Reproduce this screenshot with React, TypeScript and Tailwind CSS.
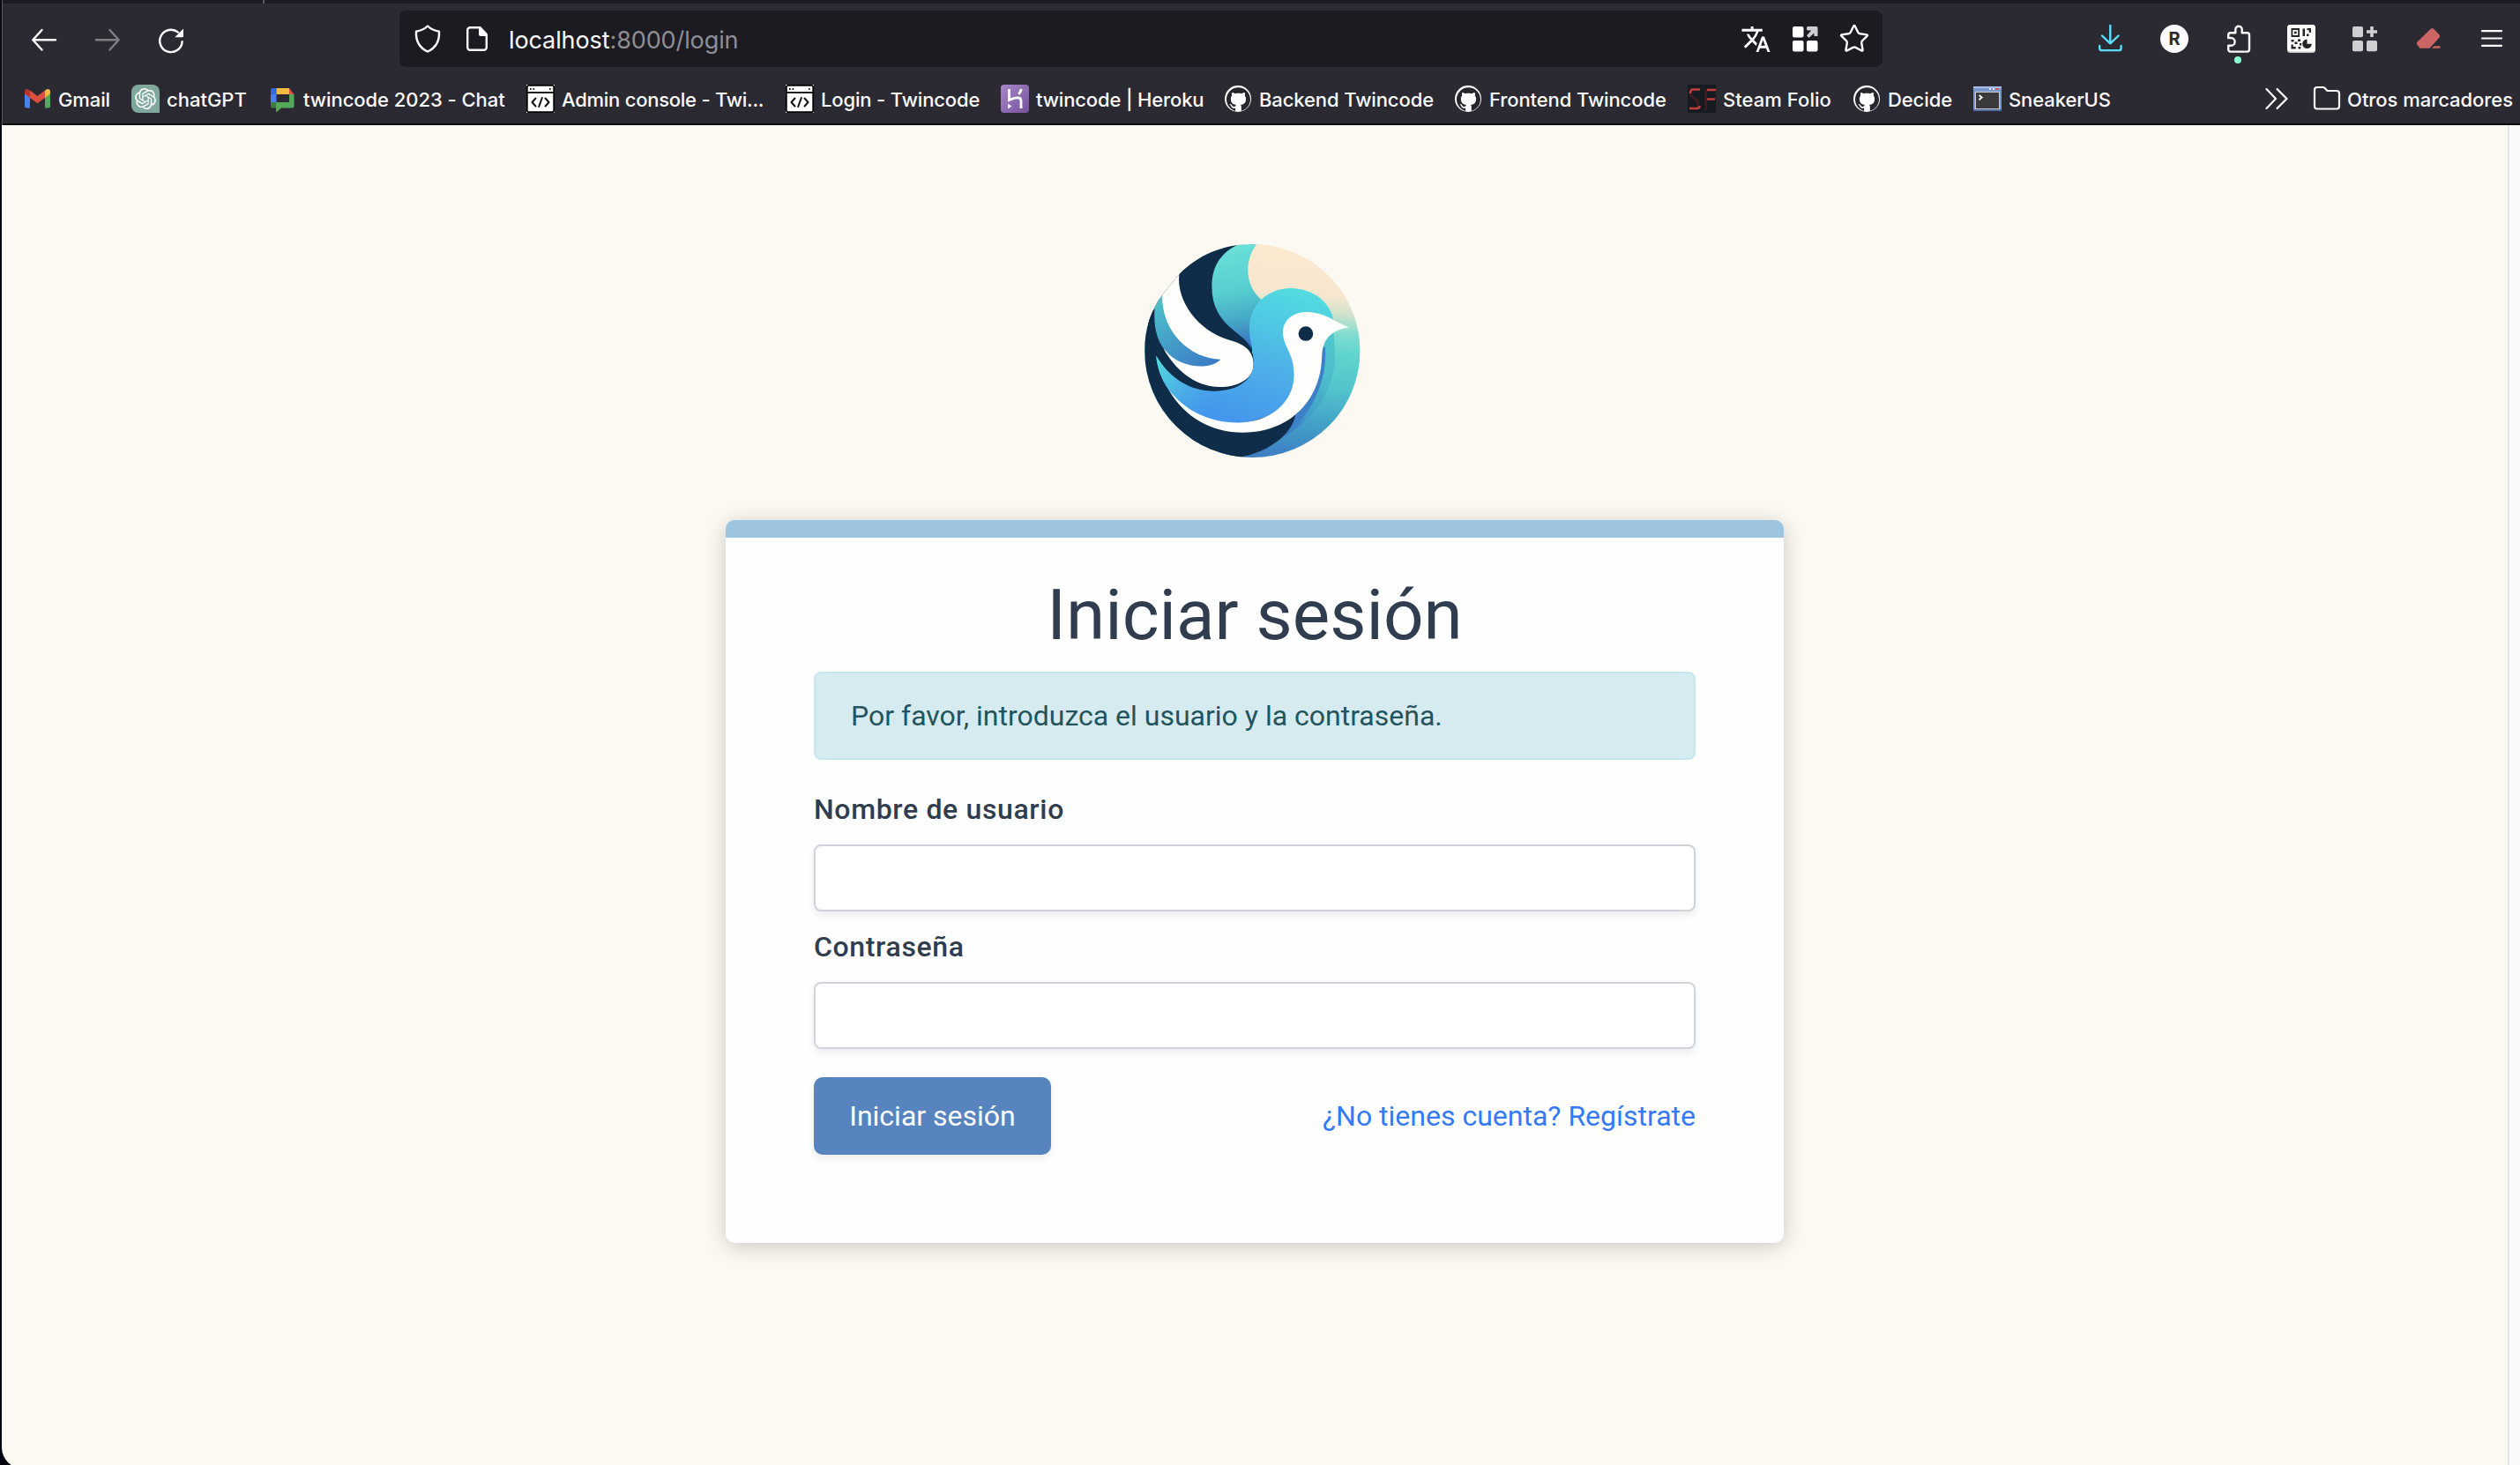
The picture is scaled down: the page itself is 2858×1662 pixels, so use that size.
import React from "react";
import { Star } from "lucide-react";
import { MdTranslate } from "react-icons/md";
import { SiOpenai, SiGithub } from "react-icons/si";

const stroke = {
  fill: "none",
  stroke: "currentColor",
  strokeWidth: 2.4,
  strokeLinecap: "round" as const,
  strokeLinejoin: "round" as const,
};

function Glyph({ children, className = "" }: { children: React.ReactNode; className?: string }) {
  return (
    <svg viewBox="0 0 32 32" className={`size-8 shrink-0 overflow-visible ${className}`}>
      {children}
    </svg>
  );
}

/* Toolbar icons */
const BackIcon = () => (
  <Glyph className="text-[#fbfbfe]">
    <path {...stroke} d="M29 17.3H3.3M13.5 6 3.3 17.3 13.5 28.5" />
  </Glyph>
);
const ForwardIcon = () => (
  <Glyph className="text-[#7f7e83]">
    <path {...stroke} d="M3 17.3h25.700M18.500 6l10.200 11.300L18.500 28.500" />
  </Glyph>
);
const ReloadIcon = () => (
  <Glyph className="text-[#fbfbfe]">
    <path {...stroke} d="M28.600 19.300A12.700 12.700 0 1 1 24 8.600" />
    <path fill="currentColor" d="M30 4.500v8.500a1.200 1.200 0 0 1-1.200 1.200h-8.500z" />
  </Glyph>
);
const ShieldIcon = () => (
  <Glyph className="text-[#fbfbfe]">
    <path {...stroke} d="M16 1.500c3.500 3.400 8 5.400 13 6.200.6 9.800-3.500 18.300-13 22.800C6.500 26 2.400 17.500 3 7.700c5-.8 9.500-2.800 13-6.200z" />
  </Glyph>
);
const PageIcon = () => (
  <Glyph className="text-[#fbfbfe]">
    <path {...stroke} d="M18 3.200H8.200a3 3 0 0 0-3 3v19.600a3 3 0 0 0 3 3h15.600a3 3 0 0 0 3-3V12" />
    <path fill="currentColor" d="M18 2h2l8 8.500v2.500h-8a2 2 0 0 1-2-2z" />
  </Glyph>
);
const OpenGridIcon = () => (
  <Glyph>
    <g fill="#fff">
      <rect x="2" y="2" width="12.500" height="12.500" rx="2" />
      <rect x="2" y="18" width="12.500" height="12.500" rx="2" />
      <rect x="18" y="18" width="12.500" height="12.500" rx="2" />
    </g>
    <path fill="#cfcfd1" d="M19.500 2h9.500a1.500 1.500 0 0 1 1.500 1.500V13h-4V9.500L20.500 15 18 12.200 23.300 6.500h-3.800a1.500 1.500 0 0 1-1.500-1.500V3.500A1.500 1.500 0 0 1 19.500 2z" />
  </Glyph>
);
const DownloadIcon = () => (
  <Glyph className="text-[#5cdcff]">
    <path {...stroke} d="M15.300 1v20.300M6 12.500l9.300 8.800 9.300-8.800M3.200 24v2.400a2.700 2.700 0 0 0 2.700 2.700h19a2.700 2.700 0 0 0 2.700-2.700V24" />
  </Glyph>
);
const AccountIcon = () => (
  <div className="flex size-8 items-center justify-center rounded-full bg-[#fbfbfe] text-[20px] leading-none font-bold text-[#2b2a33]">
    R
  </div>
);
const ExtensionIcon = () => (
  <div className="relative size-8">
    <Glyph className="text-[#fbfbfe]">
      <path
        {...stroke}
        d="M5.200 15v-3.200a2.500 2.500 0 0 1 2.500-2.500h5.600V5.400a3.700 3.700 0 0 1 7.400 0v3.900h5.800A2.500 2.500 0 0 1 29 11.800v16.300a2.500 2.500 0 0 1-2.500 2.500H7.700a2.500 2.500 0 0 1-2.500-2.500v-4.300h3a4.400 4.400 0 0 0 0-8.800z"
      />
    </Glyph>
    <span className="absolute top-9 left-3 size-2 rounded-full bg-[#88ffd1]" />
  </div>
);
const QrIcon = () => (
  <Glyph>
    <rect width="32" height="32" rx="3.500" fill="#c4c4c4" />
    <rect width="32" height="30.500" rx="3.500" fill="#fbfbfb" />
    <g fill="#242424">
      <path fillRule="evenodd" d="M4.500 4H14v10H4.500zM6.300 5.900v6.200h5.900V5.900z" />
      <rect x="8" y="7.700" width="2.600" height="2.600" />
      <path d="M17.500 4.500h2.600V13h-2.600zM22.500 4H27v5h-2.200V6.200h-2.300zM22 10.500h2.500V13H22zM4.500 17h3v2.500h-3zM12 16.500h3v2.500h-3zM8.500 19.500h3V22h-3zM4.500 22.500h2.200V25h3v2.500H4.500zM14 21h2.200v2.500H14zM12.500 25h2.700v2.500h-2.700z" />
      <path d="M22.500 16.500v5.200h5.300A5.300 5.300 0 1 1 22.500 16.500z" />
    </g>
  </Glyph>
);
const AddGridIcon = () => (
  <Glyph>
    <g fill="#cfcfd1">
      <rect x="2" y="2" width="12" height="12.200" rx="2" />
      <rect x="2" y="18" width="12" height="12.200" rx="2" />
      <rect x="18" y="18" width="12" height="12.200" rx="2" />
      <path d="M22.200 2h3.600v4.200H30v3.600h-4.200V14h-3.600V9.800H18V6.200h4.200z" />
    </g>
  </Glyph>
);
const EraserIcon = () => (
  <Glyph>
    <path fill="#cc6664" d="M19 4.600a2 2 0 0 1 2.800 0l6.800 6.900a2.300 2.300 0 0 1 0 3L17.500 26.700H6.600L3.300 22.500a2.300 2.300 0 0 1 0-2.800zM22.500 24.200h7v2.500H20z" />
  </Glyph>
);
const MenuIcon = () => (
  <Glyph className="text-[#fbfbfe]">
    <path {...stroke} strokeWidth={2.200} d="M5 7.200h22M5 15.500h22M5 23.800h22" />
  </Glyph>
);

/* Bookmark icons */
const GmailIcon = () => (
  <Glyph>
    <path fill="#4a80ee" d="M2 9l6 4.500V26.500H4A2 2 0 0 1 2 24.500z" />
    <path fill="#55a85a" d="M25 13.500 31 9v15.500a2 2 0 0 1-2 2h-4z" />
    <path fill="#f2bd42" d="M25 7l1.200-1.200C28.200 4 31 5.300 31 8v2.300l-6 4.600z" />
    <path fill="#d9503f" d="M8 6.500l8.500 6.400L25 6.500v8.400l-8.500 6.400L8 14.900z" />
    <path fill="#b93328" d="M2 8c0-2.700 2.800-4 4.800-2.200L8 7v7.900l-6-4.600z" />
  </Glyph>
);
const ChatGptIcon = () => (
  <div className="flex size-8 shrink-0 items-center justify-center rounded-t-lg rounded-bl-lg bg-[#80a79b]">
    <SiOpenai className="size-6 text-white" />
  </div>
);
const GoogleChatIcon = () => (
  <Glyph>
    <path fill="#3467d6" d="M3 6a2 2 0 0 1 2-2h4.500v7H3z" />
    <path fill="#f2bd42" d="M9.500 4H24v7H9.500z" />
    <path fill="#d9503f" d="M24 4l5.500 7H24z" />
    <path fill="#4a80ee" d="M3 11h6.500v9H3z" />
    <path fill="#3c7c40" d="M3 20h6.500v6.500H5a2 2 0 0 1-2-2z" />
    <path fill="#55a85a" d="M24 11h5.500v13.500a2 2 0 0 1-2 2H15L10 31c-.5.400-1 .1-1-.500V20h15z" />
  </Glyph>
);
const CodeWindowIcon = () => (
  <Glyph>
    <rect width="32" height="32" fill="#fff" />
    <rect x="0.800" y="0.800" width="30.400" height="30.400" rx="2" fill="#fff" stroke="#000" strokeWidth="1.800" />
    <path fill="#1f1f1f" d="M1 8h30v2H1zM4 4h1.600v2H4zM7.500 4h1.600v2H7.500zM26 4h1.600v2H26z" />
    <path {...stroke} stroke="#111" strokeWidth={2} d="M10.500 15.500 6.500 20l4 4.500M21.500 15.500l4 4.500-4 4.500M17.800 15l-3.600 10" />
  </Glyph>
);
const HerokuIcon = () => (
  <Glyph>
    <defs>
      <linearGradient id="heroku" x1="0" y1="0" x2="1" y2="1">
        <stop offset="0" stopColor="#a687c6" />
        <stop offset="1" stopColor="#77529e" />
      </linearGradient>
    </defs>
    <rect width="32" height="32" rx="4" fill="url(#heroku)" />
    <path fill="none" stroke="#fff" strokeWidth="2.800" d="M9.500 5v12.500c4-1.800 7-2.600 9.500-2.600 3 0 4 1.600 4 3.600V27M23.200 5c-.3 2.200-1.300 4-2.900 6" />
    <path fill="#fff" d="M8.200 21.500l4.200 3-4.200 3z" />
  </Glyph>
);
const GitHubIcon = () => (
  <div className="flex size-8 shrink-0 items-center justify-center">
    <div className="flex size-[30px] items-center justify-center rounded-full bg-white">
      <SiGithub className="size-[27px] text-[#26262c]" />
    </div>
  </div>
);
const SteamFolioIcon = () => (
  <Glyph>
    <rect width="32" height="32" fill="#171a21" />
    <path fill="none" stroke="#3a1d22" strokeWidth="3" d="M3.500 8v4l8 7v7M20.500 5v24" />
    <path fill="none" stroke="#c0403a" strokeWidth="2.600" d="M3 10q0-4.500 3-4.500h8M2 27h9q2.500 0 2.500-3M22 6h10M22 16.500h9" />
  </Glyph>
);
const TerminalIcon = () => (
  <Glyph>
    <rect y="2" width="32" height="28" fill="#7898cd" />
    <rect y="2" width="32" height="2" fill="#a5bde4" />
    <rect y="28" width="32" height="2" fill="#4f6ea6" />
    <rect x="2" y="8" width="28" height="20" fill="#c9cdd2" />
    <rect x="3" y="9" width="26" height="18" fill="#3a3a3a" />
    <path fill="#e8553f" d="M26 4h2.500v2H26z" />
    <path fill="#dfe7f5" d="M18 4h2v2h-2zM22 4h2v2h-2z" />
    <path fill="none" stroke="#fff" strokeWidth="1.800" d="M6.500 12l3.200 2.500-3.200 2.700" />
  </Glyph>
);
const ChevronsIcon = () => (
  <Glyph className="text-[#fbfbfe]">
    <path {...stroke} strokeWidth={2.200} d="M4.500 5 15 16 4.500 27M16.500 5 27.500 16 16.500 27" />
  </Glyph>
);
const FolderIcon = () => (
  <Glyph className="text-[#fbfbfe]">
    <path {...stroke} strokeWidth={2.200} d="M2 6a3 3 0 0 1 3-3h6.500a3 3 0 0 1 2.200 1L16.500 7H27a3 3 0 0 1 3 3v14.500a3 3 0 0 1-3 3H5a3 3 0 0 1-3-3z" />
  </Glyph>
);

const bookmarks = [
  { label: "Gmail", icon: <GmailIcon />, width: "w-[123px]", track: "tracking-[-0.1px]" },
  { label: "chatGPT", icon: <ChatGptIcon />, width: "w-[155px]", track: "tracking-[0px]" },
  { label: "twincode 2023 - Chat", icon: <GoogleChatIcon />, width: "w-[293px]", track: "tracking-[-0.05px]" },
  { label: "Admin console - Twi...", icon: <CodeWindowIcon />, width: "w-[294px]", track: "tracking-[-0.25px]" },
  { label: "Login - Twincode", icon: <CodeWindowIcon />, width: "w-[244px]", track: "tracking-[-0.15px]" },
  { label: "twincode | Heroku", icon: <HerokuIcon />, width: "w-[253px]", track: "tracking-[-0.15px]" },
  { label: "Backend Twincode", icon: <GitHubIcon />, width: "w-[261px]", track: "tracking-[-0.1px]" },
  { label: "Frontend Twincode", icon: <GitHubIcon />, width: "w-[265px]", track: "tracking-[-0.1px]" },
  { label: "Steam Folio", icon: <SteamFolioIcon />, width: "w-[187px]", track: "tracking-[0.05px]" },
  { label: "Decide", icon: <GitHubIcon />, width: "w-[137px]", track: "tracking-[-0.1px]" },
  { label: "SneakerUS", icon: <TerminalIcon />, width: "w-[160px]", track: "tracking-[-0.1px]" },
];

function BrowserChrome() {
  return (
    <header className="h-[142px] border-b-2 border-[#0c0b10] bg-[#2b2a33] font-['Inter',sans-serif] text-[#fbfbfe]">
      <div className="flex h-1 bg-[#1c1b22]">
        <div className="w-[300px] border-r-2 border-[#5b5a62]" />
      </div>
      <div className="flex h-20 items-center pr-4 pl-[34px]">
        <div className="flex gap-10">
          <BackIcon />
          <ForwardIcon />
          <ReloadIcon />
        </div>
        <div className="ml-[243px] flex h-16 w-[1682px] items-center rounded-lg bg-[#1c1b22] pr-[14px] pl-4">
          <ShieldIcon />
          <div className="ml-6">
            <PageIcon />
          </div>
          <p className="ml-5 pt-[3px] text-[27px] leading-8 tracking-[-0.1px] text-[#8f8e94]">
            <span className="text-[#fbfbfe]">localhost</span>:8000/login
          </p>
          <div className="ml-auto flex items-center">
            <MdTranslate className="mr-[22px] size-[35px] text-[#fbfbfe]" />
            <OpenGridIcon />
            <Star className="ml-[22px] size-[36px] text-[#fbfbfe]" strokeWidth={1.600} />
          </div>
        </div>
        <div className="ml-auto flex gap-10">
          <DownloadIcon />
          <AccountIcon />
          <ExtensionIcon />
          <QrIcon />
          <AddGridIcon />
          <EraserIcon />
          <MenuIcon />
        </div>
      </div>
      <nav className="flex h-14 items-center pr-2 pl-[26px] text-[22px] leading-8 font-medium whitespace-nowrap">
        {bookmarks.map((b) => (
          <a key={b.label} className={`flex shrink-0 items-center gap-2 ${b.width} ${b.track}`}>
            {b.icon}
            <span className="pt-0.5">{b.label}</span>
          </a>
        ))}
        <div className="ml-auto flex items-center">
          <ChevronsIcon />
          <div className="ml-[25px]">
            <FolderIcon />
          </div>
          <span className="ml-[7px] pt-0.5 tracking-[-0.05px]">Otros marcadores</span>
        </div>
      </nav>
    </header>
  );
}

function BirdLogo() {
  return (
    <svg viewBox="54 50 735 727" className="mr-[5px] h-[242px] w-[245px]">
      <defs>
        <clipPath id="disc">
          <path d="M172 152C235 88 320 50 421 50a367 363.500 0 0 1 0 727A367 363.500 0 0 1 54 414C54 340 75 275 115 222z" />
        </clipPath>
        <linearGradient id="sky" gradientUnits="userSpaceOnUse" x1="620" y1="60" x2="560" y2="777">
          <stop offset="0" stopColor="#fbe9d0" />
          <stop offset="0.220" stopColor="#f8e7cf" />
          <stop offset="0.300" stopColor="#d3e2cc" />
          <stop offset="0.400" stopColor="#7fdccf" />
          <stop offset="0.500" stopColor="#5ed4ce" />
          <stop offset="0.660" stopColor="#52c4cc" />
          <stop offset="0.820" stopColor="#43a3c8" />
          <stop offset="1" stopColor="#3e7fc4" />
        </linearGradient>
        <linearGradient id="band" gradientUnits="userSpaceOnUse" x1="340" y1="60" x2="400" y2="400">
          <stop offset="0" stopColor="#6be0d8" />
          <stop offset="0.450" stopColor="#56cdd0" />
          <stop offset="0.720" stopColor="#45a9c6" />
          <stop offset="1" stopColor="#3a70c4" />
        </linearGradient>
        <linearGradient id="body" gradientUnits="userSpaceOnUse" x1="540" y1="200" x2="400" y2="660">
          <stop offset="0" stopColor="#52dbe0" />
          <stop offset="0.300" stopColor="#4fc6e4" />
          <stop offset="0.650" stopColor="#4cabe8" />
          <stop offset="1" stopColor="#4497ec" />
        </linearGradient>
        <linearGradient id="tail" gradientUnits="userSpaceOnUse" x1="90" y1="450" x2="290" y2="570">
          <stop offset="0" stopColor="#55dcdc" />
          <stop offset="1" stopColor="#4cb4e6" stopOpacity="0" />
        </linearGradient>
        <linearGradient id="feather" gradientUnits="userSpaceOnUse" x1="100" y1="230" x2="260" y2="470">
          <stop offset="0" stopColor="#52c3ca" />
          <stop offset="0.550" stopColor="#439cc8" />
          <stop offset="1" stopColor="#3c7dc6" />
        </linearGradient>
        <linearGradient id="shade" gradientUnits="userSpaceOnUse" x1="680" y1="330" x2="580" y2="710">
          <stop offset="0" stopColor="#52c8cd" />
          <stop offset="0.450" stopColor="#4cbccb" />
          <stop offset="0.800" stopColor="#419cc8" />
          <stop offset="1" stopColor="#3974c4" />
        </linearGradient>
      </defs>
      <g clipPath="url(#disc)">
        <rect x="50" y="45" width="745" height="740" fill="url(#sky)" />
        <path fill="url(#shade)" d="M660 270C695 300 702 350 702 430 702 550 630 650 518 712L500 640 640 420z" />
        <path fill="#3c80c8" d="M656 400L669 400C678 520 620 640 518 712L540 620z" />
        <path fill="#0f2d48" d="M40 40H365L420 330V420L568 628C562 690 480 762 370 777H40z" />
        <path fill="url(#band)" d="M362 57L385 45H440C400 90 385 180 452 240L425 290 416 404C395 350 283 330 283 195 283 130 310 85 362 57z" />
        <path
          fill="#fefffc"
          d="M172 152C160 240 235 345 340 376 395 390 425 415 425 460 425 510 370 537 310 537 220 537 155 470 120 410L105 222z"
        />
        <path fill="url(#feather)" d="M114 222L80 240C82 330 90 375 125 413 175 475 280 480 313 443 210 440 110 350 114 222z" />
        <path fill="#0f2d48" d="M88 270C84 330 95 375 122 412L80 400 60 300z" />
        <path
          fill="url(#body)"
          d="M93 430C140 510 210 550 290 551 375 551 425 510 425 455 425 410 411 385 411 335 411 260 470 200 551 200 630 200 690 250 698 314L640 400 580 600 370 670C260 670 180 610 135 545 110 510 97 470 93 430z"
        />
        <path fill="url(#tail)" d="M93 430C140 510 210 550 290 551V655C225 640 170 595 135 545 110 510 97 470 93 430z" />
        <path
          fill="#fefffc"
          d="M750 333C700 315 670 281 603 281 560 281 525 310 525 350 525 400 563 420 563 495 563 590 480 658 370 658 270 658 190 615 135 545 190 640 280 692 390 692 540 692 655 590 658 430 662 370 690 345 750 333z"
        />
        <circle cx="603" cy="355" r="25" fill="#0f2d48" />
      </g>
    </svg>
  );
}

function Field({ label, type }: { label: string; type: string }) {
  return (
    <label className="block text-[32px] leading-[48px] font-medium tracking-[0.65px]">
      {label}
      <input
        type={type}
        className="mt-4 block h-[76px] w-full rounded-lg border-2 border-[#ced4da] bg-white px-6 shadow-[0_4px_8px_rgba(0,0,0,0.08)] outline-none"
      />
    </label>
  );
}

function LoginCard() {
  return (
    <main className="mt-[71px] h-[820px] w-[1200px] rounded-[10px] border-t-[20px] border-[#9ec5e0] bg-[#fefefe] px-[100px] text-[#2f3d4e] shadow-[0_4px_24px_rgba(0,0,0,0.2)]">
      <h1 className="mt-10 text-center text-[80px] leading-[96px]">Iniciar sesión</h1>
      <div className="mt-4 flex h-[100px] items-center rounded-lg border-2 border-[#c5e6eb] bg-[#d6ebef] px-10 text-[32px] text-[#22545e]">
        Por favor, introduzca el usuario y la contraseña.
      </div>
      <form className="mt-8 flex flex-col gap-4">
        <Field label="Nombre de usuario" type="text" />
        <Field label="Contraseña" type="password" />
        <div className="mt-4 flex items-center justify-between text-[32px]">
          <button
            type="button"
            className="h-[88px] w-[269px] rounded-[10px] bg-[#5784bf] text-white shadow-[0_4px_8px_rgba(0,0,0,0.08)]"
          >
            Iniciar sesión
          </button>
          <a className="text-[#347af6]">¿No tienes cuenta? Regístrate</a>
        </div>
      </form>
    </main>
  );
}

export default function App() {
  return (
    <div className="h-[1662px] w-[2858px] overflow-hidden bg-[#02030c]">
      <div className="relative">
        <BrowserChrome />
        <div className="absolute inset-y-0 left-0 w-[3px] border-r border-[#5b5a62] bg-[#0c0b10]" />
      </div>
      <div className="ml-0.5 flex h-[1524px] overflow-hidden rounded-bl-[24px] bg-[#fcf9f2] font-['Roboto',sans-serif]">
        <div className="flex grow flex-col items-center pt-[135px]">
          <BirdLogo />
          <LoginCard />
        </div>
        <div className="w-[14px] shrink-0 border-l-2 border-[#e8e8e8] bg-[#fafafa]" />
      </div>
    </div>
  );
}
